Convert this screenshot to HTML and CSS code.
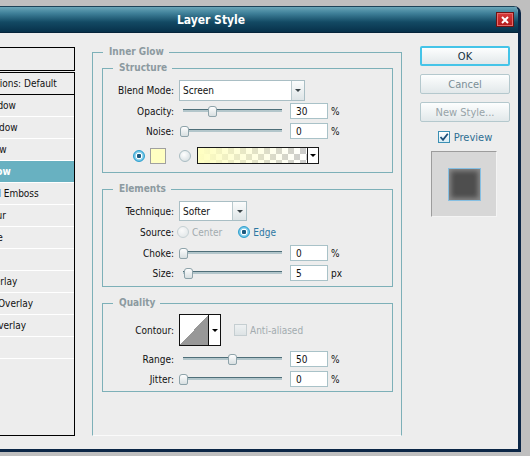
FILE: index.html
```html
<!DOCTYPE html>
<html lang="en">
<head>
    <meta charset="UTF-8">
    <title>Layer Style</title>
    <link rel="stylesheet" href="styles.css">
</head>
<body>
    <div class="window">
        <div class="titlebar">
            <span></span>
            <span class="title">Layer Style</span>
            <span class="close"><svg width="8" height="8" viewBox="0 0 8 8"><path d="M1 1L7 7M7 1L1 7" stroke="#fff" stroke-width="2"/></svg></span>
        </div>

        <div class="dialog">
            <!-- styles list (left part is cut off by the screen edge) -->
            <div class="styles-pane">
                <div class="styles-head">Styles</div>
                <ul class="fx-list">
                    <li class="fx-blend">Blending Options: Default</li>
                    <li>Drop Shadow</li>
                    <li>Inner Shadow</li>
                    <li>Outer Glow</li>
                    <li class="selected">Inner Glow</li>
                    <li>Bevel and Emboss</li>
                    <li class="fx-sub">Contour</li>
                    <li class="fx-sub">Texture</li>
                    <li>Satin</li>
                    <li>Color Overlay</li>
                    <li>Gradient Overlay</li>
                    <li>Pattern Overlay</li>
                    <li>Stroke</li>
                </ul>
            </div>

            <fieldset class="group group-main">
                <legend>Inner Glow</legend>

                <fieldset class="group group-structure">
                    <legend>Structure</legend>
                    <div class="row row-select">
                        <span class="lbl">Blend Mode:</span>
                        <div class="select select-blend">
                            <span class="select-text">Screen</span>
                            <span class="select-drop"><i class="tri"></i></span>
                        </div>
                    </div>
                    <div class="row row-opacity">
                        <span class="lbl">Opacity:</span>
                        <div class="slider"><span class="track"></span><span class="thumb" style="left: 29px"></span></div>
                        <input class="num" type="text" value="30">
                        <span class="unit">%</span>
                    </div>
                    <div class="row row-next">
                        <span class="lbl">Noise:</span>
                        <div class="slider"><span class="track"></span><span class="thumb" style="left: 1px"></span></div>
                        <input class="num" type="text" value="0">
                        <span class="unit">%</span>
                    </div>
                    <div class="row color-row">
                        <span class="radio on"></span>
                        <span class="swatch"></span>
                        <span class="radio radio-grad"></span>
                        <div class="grad">
                            <span class="grad-fill"></span>
                            <span class="grad-drop"><i class="tri dark"></i></span>
                        </div>
                    </div>
                </fieldset>

                <fieldset class="group group-elements">
                    <legend>Elements</legend>
                    <div class="row row-tech">
                        <span class="lbl">Technique:</span>
                        <div class="select select-tech">
                            <span class="select-text">Softer</span>
                            <span class="select-drop"><i class="tri"></i></span>
                        </div>
                    </div>
                    <div class="row row-source">
                        <span class="lbl">Source:</span>
                        <span class="radio off"></span>
                        <span class="opt opt-off">Center</span>
                        <span class="radio on radio-edge"></span>
                        <span class="opt opt-on">Edge</span>
                    </div>
                    <div class="row row-choke">
                        <span class="lbl">Choke:</span>
                        <div class="slider"><span class="track"></span><span class="thumb" style="left: 0"></span></div>
                        <input class="num" type="text" value="0">
                        <span class="unit">%</span>
                    </div>
                    <div class="row row-next">
                        <span class="lbl">Size:</span>
                        <div class="slider"><span class="track"></span><span class="thumb" style="left: 5px"></span></div>
                        <input class="num" type="text" value="5">
                        <span class="unit">px</span>
                    </div>
                </fieldset>

                <fieldset class="group group-quality">
                    <legend>Quality</legend>
                    <div class="row row-contour">
                        <span class="lbl">Contour:</span>
                        <div class="contour">
                            <span class="contour-img"></span>
                            <span class="contour-drop"><i class="tri dark"></i></span>
                        </div>
                        <span class="check disabled"></span>
                        <span class="opt opt-off">Anti-aliased</span>
                    </div>
                    <div class="row row-range">
                        <span class="lbl">Range:</span>
                        <div class="slider"><span class="track"></span><span class="thumb" style="left: 49px"></span></div>
                        <input class="num" type="text" value="50">
                        <span class="unit">%</span>
                    </div>
                    <div class="row row-next">
                        <span class="lbl">Jitter:</span>
                        <div class="slider"><span class="track"></span><span class="thumb" style="left: 0"></span></div>
                        <input class="num" type="text" value="0">
                        <span class="unit">%</span>
                    </div>
                </fieldset>
            </fieldset>

            <div class="actions">
                <button class="btn btn-ok">OK</button>
                <button class="btn">Cancel</button>
                <button class="btn btn-muted">New Style...</button>
                <label class="preview-check">
                    <span class="check on"><svg width="10" height="10" viewBox="0 0 10 10"><path d="M1.5 5L4 7.8L8.8 1.8" fill="none" stroke="#1d4f7a" stroke-width="1.8"/></svg></span>
                    <span>Preview</span>
                </label>
                <div class="preview-box">
                    <div class="preview-swatch"></div>
                </div>
            </div>
        </div>
    </div>
</body>
</html>
```

FILE: styles.css
```css
* {
    margin: 0;
    padding: 0;
    box-sizing: border-box;
}

body {
    background: #bfbfbf;
    font-family: "DejaVu Sans Condensed", "Liberation Sans", sans-serif;
    font-size: 10px;
    color: #111;
    overflow: hidden;
}

.window {
    width: 617px;
    margin: 6px 0 0 -96px;
    background: #ededed;
    border-right: 3px solid #0b2646;
    border-bottom: 3px solid #0b2646;
    border-top-right-radius: 7px;
    overflow: hidden;
}

.titlebar {
    height: 27px;
    display: grid;
    grid-template-columns: 1fr auto 1fr;
    align-items: center;
    background: linear-gradient(#6aa6b8 0%, #3f8099 25%, #134a64 60%, #07314a 100%);
    border-top: 1px solid #1c4358;
    border-bottom: 1px solid #05243a;
}

.title {
    color: #fff;
    font-weight: bold;
    font-size: 12px;
}

.close {
    justify-self: end;
    margin-right: 4px;
    width: 18px;
    height: 15px;
    display: flex;
    align-items: center;
    justify-content: center;
    background: linear-gradient(#d83a3a, #b01a1a);
    border: 1px solid #6f1212;
    box-shadow: inset 0 0 0 1px #e46a6a;
}

.dialog {
    display: flex;
    height: 416px;
}

/* left column */
.styles-pane {
    width: 161px;
    margin-left: 10px;
    margin-top: 14px;
    flex: none;
}

.styles-head {
    height: 24px;
    border: 1px solid #000;
    padding-left: 4px;
    line-height: 22px;
}

.fx-list {
    list-style: none;
    margin-top: 1px;
    height: 364px;
    border: 1px solid #000;
}

.fx-list li {
    height: 22px;
    line-height: 21px;
    padding-left: 41px;
    border-bottom: 1px solid #fff;
    white-space: nowrap;
}

.fx-list .fx-blend {
    padding-left: 26px;
    border-bottom-color: #000;
}

.fx-list .fx-sub {
    padding-left: 55px;
}

.fx-list .selected {
    background: #68b1c1;
    color: #fff;
    font-weight: bold;
}

/* fieldsets */
.group {
    border: 1px solid #7db0b8;
    padding: 0 9px;
    min-width: 0;
}

.group legend {
    margin-left: 1px;
    padding: 0 5px 0 6px;
    line-height: 14px;
    font-weight: bold;
    color: #8c9aa0;
}

.group-main {
    width: 310px;
    height: 391px;
    margin: 12px 0 0 17px;
    padding-right: 8px;
    border-bottom-color: #fafafa;
    flex: none;
}

.group-structure {
    margin-top: 2px;
    padding-bottom: 8px;
}

.group-elements {
    margin-top: 9px;
    padding-bottom: 5px;
}

.group-quality {
    margin-top: 9px;
    padding-bottom: 4px;
}

.row {
    display: flex;
    align-items: center;
    height: 16px;
}

.row-select { height: 21px; margin-top: 5px; }
.row-opacity { margin-top: 2px; }
.row-next { margin-top: 4px; }
.row-tech { height: 20px; margin-top: 5px; }
.row-source { margin-top: 3px; }
.row-choke { margin-top: 5px; }
.row-contour { height: 32px; margin-top: 4px; }
.row-range { margin-top: 5px; }

.lbl {
    width: 62px;
    margin-right: 5px;
    text-align: right;
    flex: none;
}

/* dropdowns */
.select {
    display: flex;
    height: 100%;
    border: 1px solid #a9bec4;
    background: #fff;
}

.select-blend { width: 126px; }
.select-tech { width: 68px; }

.select-text {
    flex: 1;
    padding-left: 3px;
    line-height: 19px;
}

.select-drop {
    width: 13px;
    display: flex;
    align-items: center;
    justify-content: center;
    border-left: 1px solid #b9c9cd;
    background: linear-gradient(#fbfcfc, #dee5e7);
}

.select-tech .select-drop { width: 14px; }

.tri {
    width: 0;
    height: 0;
    border-left: 3px solid transparent;
    border-right: 3px solid transparent;
    border-top: 3px solid #3a4448;
}

.tri.dark { border-top-color: #000; }

/* sliders */
.slider {
    position: relative;
    width: 107px;
    height: 16px;
    flex: none;
}

.track {
    position: absolute;
    left: 4px;
    right: 4px;
    top: 6px;
    height: 3px;
    background: #b3c6cb;
    border-top: 1px solid #4f6f79;
}

.thumb {
    position: absolute;
    top: 3px;
    width: 9px;
    height: 11px;
    border: 1px solid #8ea3aa;
    border-radius: 3px 3px 2px 2px;
    background: linear-gradient(#fefefe, #d8dfe1);
}

.num {
    width: 38px;
    height: 16px;
    margin-left: 4px;
    border: 1px solid #a9c2c8;
    background: #fff;
    padding-left: 5px;
    font: inherit;
    color: #111;
    outline: none;
}

.unit {
    margin-left: 3px;
}

/* radios and checks */
.radio {
    width: 12px;
    height: 12px;
    border-radius: 50%;
    border: 1px solid #a9bcc2;
    background: radial-gradient(circle at 40% 35%, #fff, #cfd9dc);
    flex: none;
}

.radio.on {
    border-color: #2d9fcf;
    background: radial-gradient(circle, #1c5a80 0 2px, #fff 2.5px 3px, #9bd8ef 3.5px, #3db0dc 6px);
}

.radio.off {
    border-color: #c6d1d4;
    background: radial-gradient(circle at 40% 35%, #fafafa, #dde3e5);
    margin-left: -2px;
}

.opt { margin-left: 3px; }
.opt-off { color: #a2abaf; }
.opt-on { color: #2c77a2; }
.radio-edge { margin-left: 16px; }

.color-row {
    height: 17px;
    margin-top: 8px;
    padding-left: 21px;
}

.swatch {
    width: 16px;
    height: 16px;
    margin-left: 5px;
    background: #ffffc2;
    border: 1px solid #a0a0a0;
}

.radio-grad { margin-left: 13px; }

.grad {
    display: flex;
    width: 122px;
    height: 17px;
    margin-left: 6px;
    border: 1px solid #1a1a1a;
}

.grad-fill {
    flex: 1;
    background:
        linear-gradient(to right, #ffffc0 0%, rgba(255, 255, 192, 0.6) 35%, rgba(255, 255, 192, 0) 100%),
        repeating-conic-gradient(#cccccc 0 25%, #ffffff 0 50%) 0 0 / 12px 12px;
}

.grad-drop {
    width: 11px;
    display: flex;
    align-items: center;
    justify-content: center;
    border-left: 1px solid #1a1a1a;
    background: #fff;
}

.contour {
    display: flex;
    width: 42px;
    height: 32px;
    border: 1px solid #111;
    flex: none;
}

.contour-img {
    flex: 1;
    background: linear-gradient(to top left, #989898 50%, #fff 50%);
}

.contour-drop {
    width: 12px;
    display: flex;
    align-items: center;
    justify-content: center;
    border-left: 1px solid #111;
    background: #fff;
}

.check {
    width: 12px;
    height: 12px;
    display: flex;
    align-items: center;
    justify-content: center;
    flex: none;
}

.check.disabled {
    width: 13px;
    margin-left: 13px;
    border: 1px solid #c5ced1;
    background: linear-gradient(#eef1f2, #dde3e5);
}

.check.on {
    border: 1px solid #3a8fb4;
    background: linear-gradient(#ffffff, #d7ecf5);
}

/* right column */
.actions {
    width: 90px;
    margin-left: 18px;
    padding-top: 13px;
    flex: none;
}

.btn {
    display: block;
    width: 90px;
    height: 20px;
    margin-top: 8px;
    border: 1px solid #b4c8cd;
    border-radius: 2px;
    background: linear-gradient(#fdfefe, #e2e8ea);
    font: inherit;
    font-size: 11px;
    color: #7b8e96;
}

.btn-ok {
    margin-top: 0;
    border: 2px solid #45c4e8;
    color: #15313f;
}

.btn-muted {
    color: #97a3a8;
}

.preview-check {
    display: flex;
    align-items: center;
    justify-content: center;
    gap: 4px;
    height: 12px;
    margin-top: 9px;
    font-size: 11px;
    color: #2f6f93;
}

.preview-box {
    width: 66px;
    height: 66px;
    margin: 8px 0 0 11px;
    display: flex;
    align-items: center;
    justify-content: center;
    background: #d7d7d7;
    border-top: 1px solid #9c9c9c;
    border-left: 1px solid #9c9c9c;
    border-right: 1px solid #f4f4f4;
    border-bottom: 1px solid #f4f4f4;
}

.preview-swatch {
    width: 33px;
    height: 33px;
    background: #4e4e4e;
    border: 1px solid #86bfe2;
    box-shadow: inset 0 0 5px 2px #8a8a8a;
}
```
